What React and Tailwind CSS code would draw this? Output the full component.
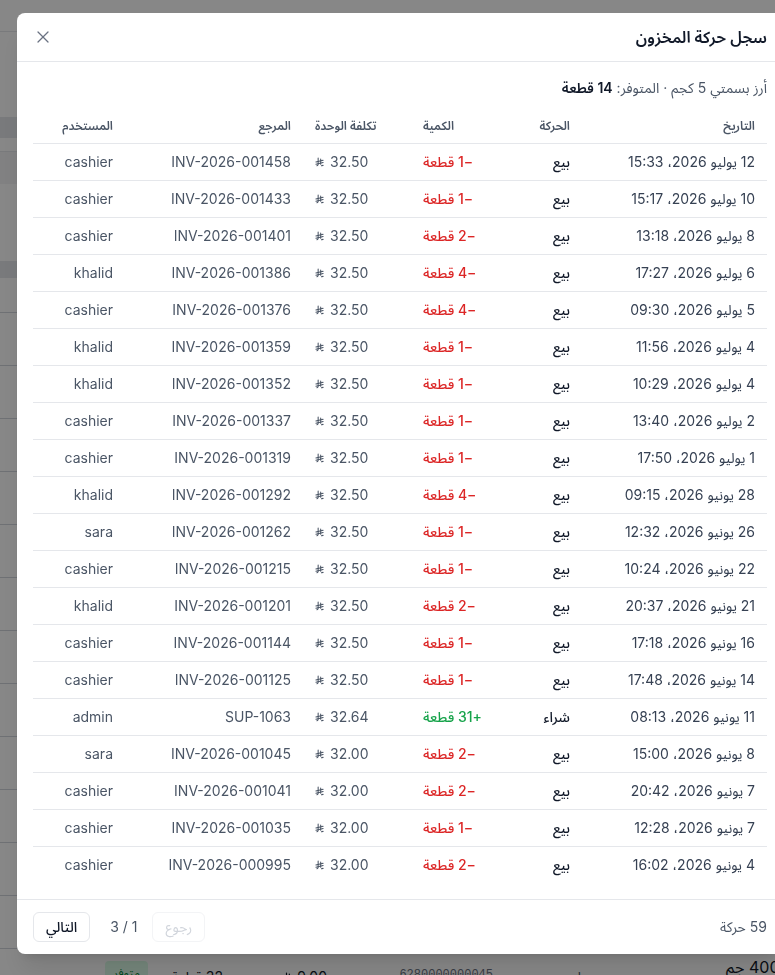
import React from 'react';
import { X } from 'lucide-react';

const rows = [
  ['12 يوليو 2026، 15:33', 'بيع', -1, '32.50', 'INV-2026-001458', 'cashier'],
  ['10 يوليو 2026، 15:17', 'بيع', -1, '32.50', 'INV-2026-001433', 'cashier'],
  ['8 يوليو 2026، 13:18', 'بيع', -2, '32.50', 'INV-2026-001401', 'cashier'],
  ['6 يوليو 2026، 17:27', 'بيع', -4, '32.50', 'INV-2026-001386', 'khalid'],
  ['5 يوليو 2026، 09:30', 'بيع', -4, '32.50', 'INV-2026-001376', 'cashier'],
  ['4 يوليو 2026، 11:56', 'بيع', -1, '32.50', 'INV-2026-001359', 'khalid'],
  ['4 يوليو 2026، 10:29', 'بيع', -1, '32.50', 'INV-2026-001352', 'khalid'],
  ['2 يوليو 2026، 13:40', 'بيع', -1, '32.50', 'INV-2026-001337', 'cashier'],
  ['1 يوليو 2026، 17:50', 'بيع', -1, '32.50', 'INV-2026-001319', 'cashier'],
  ['28 يونيو 2026، 09:15', 'بيع', -4, '32.50', 'INV-2026-001292', 'khalid'],
  ['26 يونيو 2026، 12:32', 'بيع', -1, '32.50', 'INV-2026-001262', 'sara'],
  ['22 يونيو 2026، 10:24', 'بيع', -1, '32.50', 'INV-2026-001215', 'cashier'],
  ['21 يونيو 2026، 20:37', 'بيع', -2, '32.50', 'INV-2026-001201', 'khalid'],
  ['16 يونيو 2026، 17:18', 'بيع', -1, '32.50', 'INV-2026-001144', 'cashier'],
  ['14 يونيو 2026، 17:48', 'بيع', -1, '32.50', 'INV-2026-001125', 'cashier'],
  ['11 يونيو 2026، 08:13', 'شراء', 31, '32.64', 'SUP-1063', 'admin'],
  ['8 يونيو 2026، 15:00', 'بيع', -2, '32.00', 'INV-2026-001045', 'sara'],
  ['7 يونيو 2026، 20:42', 'بيع', -2, '32.00', 'INV-2026-001041', 'cashier'],
  ['7 يونيو 2026، 12:28', 'بيع', -1, '32.00', 'INV-2026-001035', 'cashier'],
  ['4 يونيو 2026، 16:02', 'بيع', -2, '32.00', 'INV-2026-000995', 'cashier'],
];

// new riyal sign, drawn since the installed fonts lack U+20C1
const Riyal = ({ className }) => (
  <svg viewBox="0 0 12 13" className={className} fill="none" stroke="currentColor" strokeWidth="1.4" strokeLinecap="round">
    <path d="M4.2 1.2V9.6c0 .9-.5 1.6-1.6 2" />
    <path d="M7.6 2.4v7.2" />
    <path d="M1.2 6.4l9.6-2.2" />
    <path d="M1.2 9.4l9.6-2.2" />
    <path d="M8.6 11.6l2.2-.6" />
  </svg>
);

const font = { fontFamily: 'Inter, "Noto Sans Arabic", "DejaVu Sans", sans-serif' };

const Qty = ({ n }) => (
  <span className={n > 0 ? 'text-[#16a34a]' : 'text-[#dc2626]'}>
    {n > 0 ? `+${n}` : `−${Math.abs(n)}`} قطعة
  </span>
);

// products page sitting behind the dialog
const BackdropPage = () => (
  <div className="w-[775px] h-[975px] overflow-hidden bg-white text-gray-900">
    <div className="h-[32px] border-b border-gray-200"></div>
    <div className="h-[85px]"></div>
    <div className="h-[21px] bg-gray-200"></div>
    <div className="h-[13px]"></div>
    <div className="h-[33px] bg-gray-100 border-t border-gray-200"></div>
    <div className="h-[77px]"></div>
    <div className="h-[17px] bg-gray-200"></div>
    <div className="h-[34px]"></div>
    {Array.from({ length: 12 }).map((_, i) => (
      <div key={i} className="h-[53px] border-t border-gray-300"></div>
    ))}
    <div className="h-[53px] border-t border-gray-300 flex items-start text-sm">
      <div className="w-[155px] shrink-0 -mr-[85px] pt-1.5 text-base whitespace-nowrap">فول مدمس 400 جم</div>
      <div className="w-[150px] shrink-0 pt-[18px] pr-[92px] text-gray-600 whitespace-nowrap">مجمدات</div>
      <div className="w-[162px] shrink-0 pt-[18px] pr-[62px] text-gray-500 text-[12px] font-mono">6280000000045</div>
      <div className="w-[120px] shrink-0 pt-[18px] pr-[66px] flex">
        <span className="inline-flex items-center gap-1 [direction:ltr]"><Riyal className="w-[10px] h-[11px]" />9.00</span>
      </div>
      <div className="w-[110px] shrink-0 pt-[18px] pr-[50px] whitespace-nowrap">32 قطعة</div>
      <div className="pt-3 pr-[15px]">
        <span className="inline-block rounded bg-green-100 text-green-700 text-xs px-2 py-1">متوفر</span>
      </div>
    </div>
  </div>
);

export default function App() {
  return (
    <div dir="rtl" style={font} className="relative w-[775px] h-[975px] overflow-hidden">
      <BackdropPage />
      <div className="fixed inset-0 bg-black/[0.47]"></div>

      <div className="fixed left-[17px] top-[13px] w-[766px] bg-white rounded-lg shadow-xl">
        <div className="flex items-center justify-between px-4 py-3 border-b border-gray-200">
          <h2 className="text-base leading-6 font-semibold text-gray-900">سجل حركة المخزون</h2>
          <button className="p-0.5 -ml-0.5 text-gray-500">
            <X size={20} strokeWidth={1.5} />
          </button>
        </div>

        <div className="px-4 pt-4 pb-4">
          <p className="text-sm leading-5 text-gray-600 mb-2.5">
            أرز بسمتي 5 كجم · المتوفر: <span className="font-semibold text-gray-900">14 قطعة</span>
          </p>
          <table className="w-full table-fixed text-sm">
            <thead>
              <tr className="border-b border-gray-200 text-xs leading-[15px] text-gray-600">
                <th className="w-[185px] px-3 py-2.5 text-right font-semibold">التاريخ</th>
                <th className="w-[85px] px-3 py-2.5 text-right font-semibold">الحركة</th>
                <th className="w-[86px] px-3 py-2.5 text-left font-semibold">الكمية</th>
                <th className="w-[108px] px-3 py-2.5 text-left font-semibold">تكلفة الوحدة</th>
                <th className="w-[178px] px-3 py-2.5 text-right font-semibold">المرجع</th>
                <th className="w-[92px] px-3 py-2.5 text-right font-semibold">المستخدم</th>
              </tr>
            </thead>
            <tbody>
              {rows.map((r, i) => (
                <tr key={i} className={i < rows.length - 1 ? 'border-b border-gray-200' : ''}>
                  <td className="px-3 py-2 leading-5 text-gray-700 whitespace-nowrap">{r[0]}</td>
                  <td className="px-3 py-2 leading-5 text-gray-900 font-medium">{r[1]}</td>
                  <td className="px-3 py-2 leading-5 text-left font-medium whitespace-nowrap">
                    <Qty n={r[2]} />
                  </td>
                  <td className="px-3 py-2 leading-5 text-left text-gray-600">
                    <span className="inline-flex items-center gap-1.5 [direction:ltr]">
                      <Riyal className="w-[9px] h-[10px]" />
                      {r[3]}
                    </span>
                  </td>
                  <td className="px-3 py-2 leading-5 text-gray-600">{r[4]}</td>
                  <td className="px-3 py-2 leading-5 text-gray-600">{r[5]}</td>
                </tr>
              ))}
            </tbody>
          </table>
        </div>

        <div className="flex items-center justify-between px-4 py-3 border-t border-gray-200">
          <span className="text-sm text-gray-600">59 حركة</span>
          <div className="flex items-center gap-[15px] text-sm">
            <button className="h-[30px] px-3 rounded-md border border-gray-100 text-gray-300">رجوع</button>
            <span className="ml-[5px] text-gray-600">1 / 3</span>
            <button className="h-[30px] px-3 rounded-md border border-gray-200 text-gray-900 font-medium">التالي</button>
          </div>
        </div>
      </div>
    </div>
  );
}
